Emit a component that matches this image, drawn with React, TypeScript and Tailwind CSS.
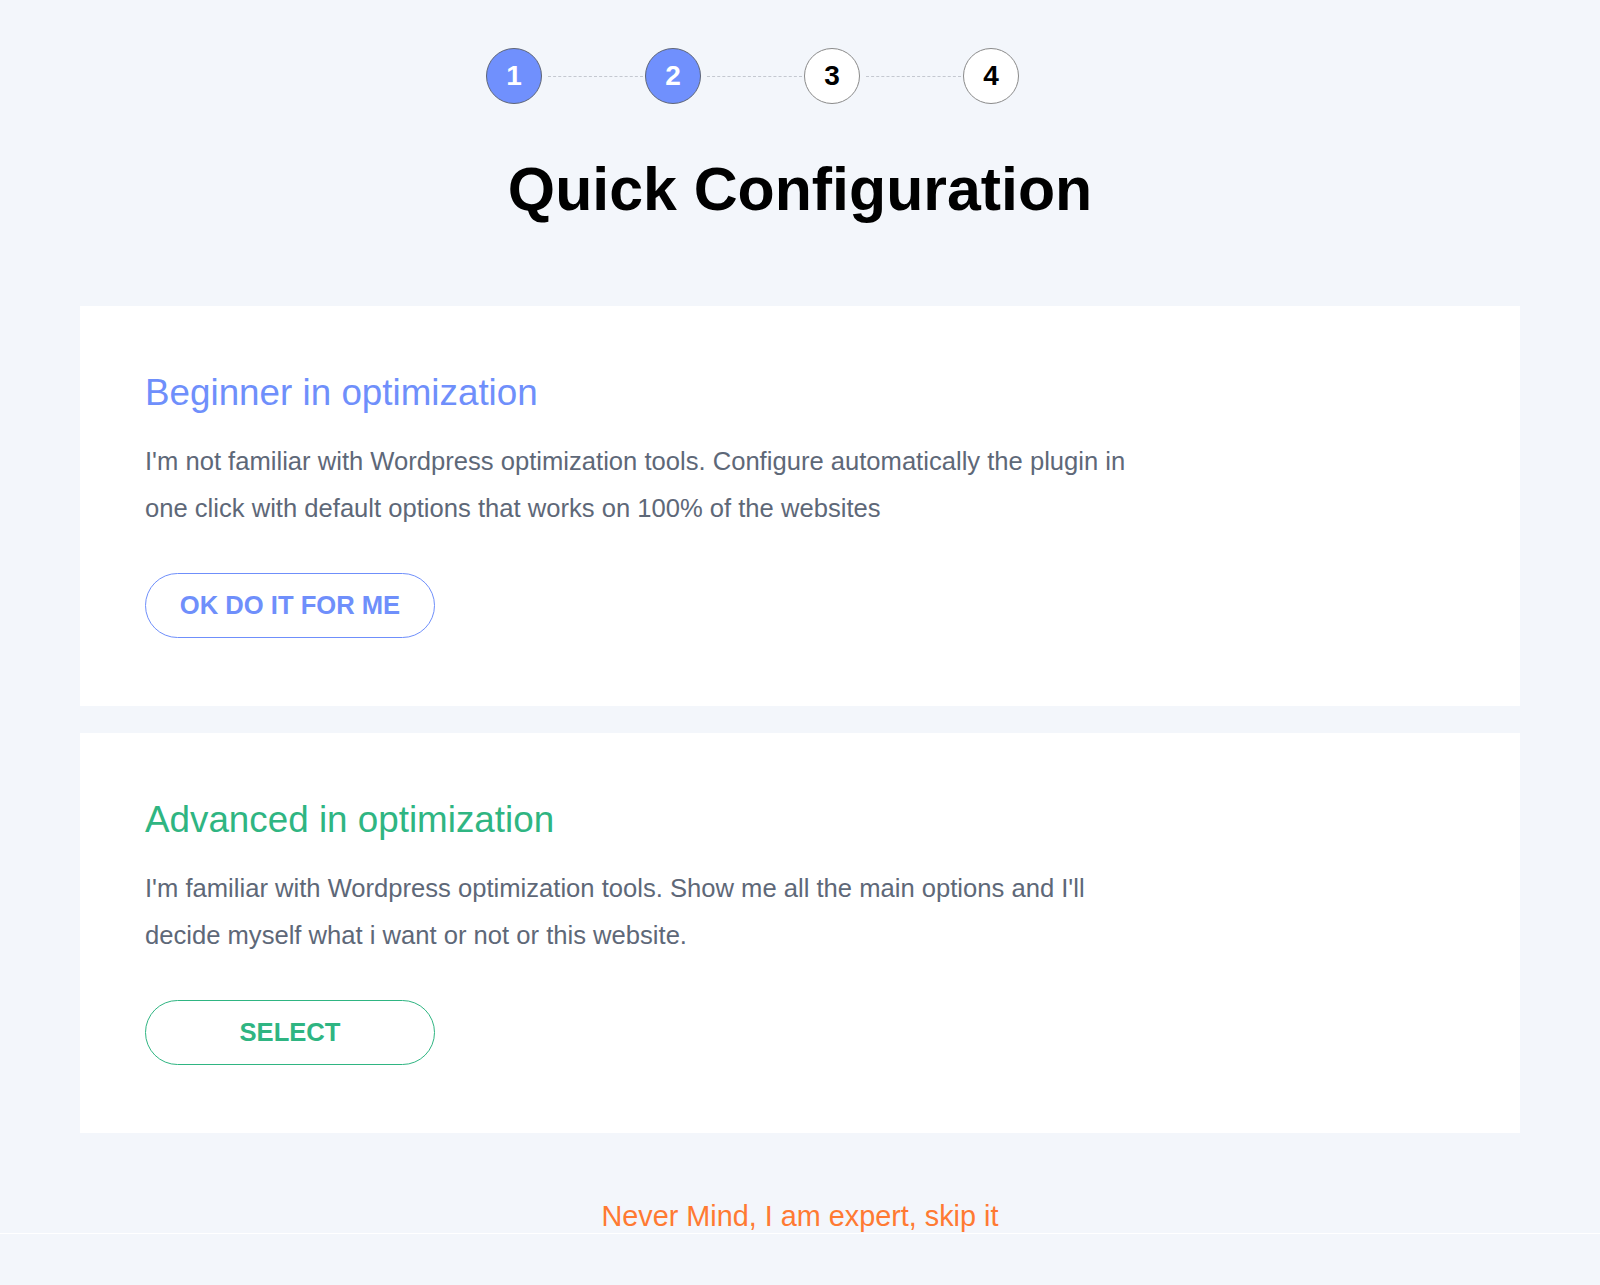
const steps = [
  { n: 1, done: true },
  { n: 2, done: true },
  { n: 3, done: false },
  { n: 4, done: false },
]

const options = [
  {
    title: 'Beginner in optimization',
    text: "I'm not familiar with Wordpress optimization tools. Configure automatically the plugin in one click with default options that works on 100% of the websites",
    action: 'OK DO IT FOR ME',
    titleClass: 'text-[#6f8ffb]',
    buttonClass: 'border-[#6f8ffb] text-[#6f8ffb]',
  },
  {
    title: 'Advanced in optimization',
    text: "I'm familiar with Wordpress optimization tools. Show me all the main options and I'll decide myself what i want or not or this website.",
    action: 'SELECT',
    titleClass: 'text-[#2fb582]',
    buttonClass: 'border-[#2fb582] text-[#2fb582]',
  },
]

function Stepper() {
  return (
    <div className="mx-auto flex w-[644px] pl-2">
      {steps.map((step, i) => (
        <div key={step.n} className="flex w-[159px] items-center">
          <div
            className={
              step.done
                ? 'flex h-14 w-14 shrink-0 items-center justify-center rounded-full border border-[#5f6677] bg-[#7090fd] text-[28px] font-bold text-white'
                : 'flex h-14 w-14 shrink-0 items-center justify-center rounded-full border border-[#8a8a8a] bg-white text-[28px] font-bold text-black'
            }
          >
            {step.n}
          </div>
          {i < steps.length - 1 && (
            <div className="ml-1.5 mr-0.5 flex-1 border-t border-dashed border-[#c4c8d0]" />
          )}
        </div>
      ))}
    </div>
  )
}

export default function App() {
  return (
    <div className="min-h-[1285px] bg-[#f3f6fb] font-['Liberation_Sans',Arial,sans-serif]">
      <div className="pt-12">
        {/* Steps */}
        <Stepper />

        {/* Heading */}
        <h1 className="mt-[50px] text-center text-[60.8px] font-bold leading-[70px] text-black">
          Quick Configuration
        </h1>

        {/* Choices */}
        <div className="mx-20 mt-[82px] flex flex-col gap-[27px]">
          {options.map((o) => (
            <div key={o.title} className="h-[400px] bg-white pl-[65px] pr-16 pt-[66px]">
              <h2 className={`text-[36.8px] leading-[41px] ${o.titleClass}`}>{o.title}</h2>
              <p className="mt-[25px] max-w-[1000px] text-[25.6px] leading-[47px] text-[#5e6878]">
                {o.text}
              </p>
              <button
                type="button"
                className={`mt-[41px] h-[65px] w-[290px] rounded-full border bg-white text-[25.6px] font-bold ${o.buttonClass}`}
              >
                {o.action}
              </button>
            </div>
          ))}
        </div>

        {/* Skip */}
        <div className="mt-[67px] flex h-[33px] justify-center">
          <a href="#" className="text-[28.8px] leading-[33px] text-[#ff7a32]">
            Never Mind, I am expert, skip it
          </a>
        </div>
      </div>
      <div className="border-t border-white" />
    </div>
  )
}
